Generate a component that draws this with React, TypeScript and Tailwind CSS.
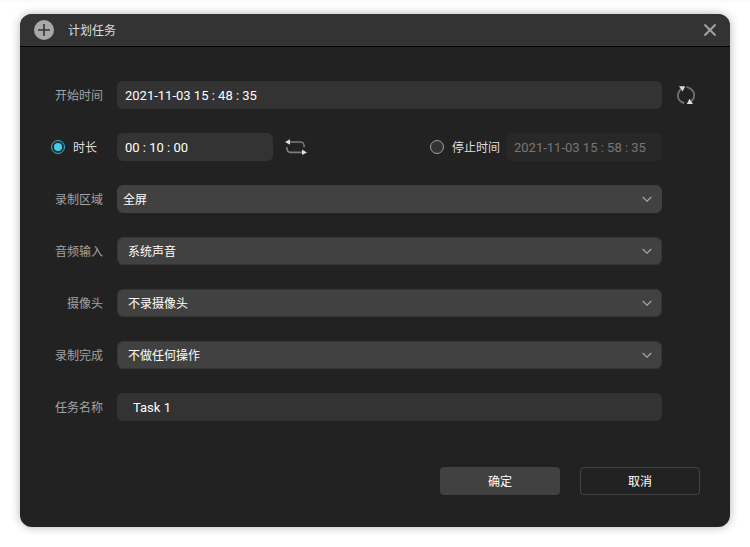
import { useState, type ReactNode } from 'react';
import clsx from 'clsx';

interface RowProps {
  id: string;
  label: string;
  children: ReactNode;
  extra?: ReactNode;
}

function Row({ id, label, children, extra }: RowProps) {
  return (
    <div className="flex h-7 items-center">
      <label htmlFor={id} className="w-[97px] shrink-0 pr-3.5 text-right text-[#a3a3a3]">
        {label}
      </label>
      <div className="min-w-0 flex-1">{children}</div>
      <div className="flex w-[68px] shrink-0 pl-3.5">{extra}</div>
    </div>
  );
}

interface SelectProps {
  id: string;
  options: string[];
  outlined?: boolean;
}

function Select({ id, options, outlined }: SelectProps) {
  return (
    <div className="relative">
      <select
        id={id}
        className={clsx(
          'block h-7 w-full appearance-none rounded-md border bg-[#414141] pr-8 text-[12px] leading-4 text-white outline-none',
          outlined ? 'border-[#363636] pl-2.5' : 'border-[#414141] pl-[5px]',
        )}
      >
        {options.map((option) => (
          <option key={option}>{option}</option>
        ))}
      </select>
      <svg
        className="pointer-events-none absolute top-2.5 right-2.5 h-2 w-2.5"
        viewBox="0 0 10 8"
        fill="none"
        stroke="#a8a8a8"
        strokeWidth="1.2"
      >
        <path d="M0.7 2 5 6.2 9.3 2" />
      </svg>
    </div>
  );
}

const inputClass =
  "block h-7 rounded-md bg-[#333] px-2 font-[Roboto,'Noto_Sans_CJK_SC',sans-serif] text-[13px] text-white outline-none disabled:bg-[#282828] disabled:text-[#777]";

const radioClass =
  "grid h-3.5 w-3.5 shrink-0 appearance-none place-items-center rounded-full border border-[#a0a0a0] bg-[#333] before:h-2 before:w-2 before:rounded-full before:content-[''] checked:border-[#35b3cd] checked:bg-[#1d3035] checked:before:bg-[#45cdea]";

function RefreshIcon() {
  return (
    <svg className="h-5 w-5" viewBox="0 0 20 20" fill="none">
      <path d="M4.8 4.2C1 7.4 1 12.6 3.8 15.6 5 16.9 6.4 17.6 8.2 18" stroke="#737373" strokeWidth="1.8" />
      <path d="M10.4 2.2C15 2.6 18.2 6 18.2 10.2 18.2 12.6 17.4 14.4 15.4 16.2" stroke="#737373" strokeWidth="1.8" />
      <path d="M3 1.2H9.2L6.6 6.4Z" fill="#dedede" />
      <path d="M17 19H10.8L13.6 13.8Z" fill="#dedede" />
    </svg>
  );
}

function RepeatIcon() {
  return (
    <svg className="h-4 w-[23px]" viewBox="0 0 23 16" fill="none">
      <path d="M4 3H15.5C18.6 3 19.2 4.6 19.2 8.2" stroke="#7c7c7c" strokeWidth="1.6" />
      <path d="M1.8 8C1.8 12 2.8 13.4 5.4 13.4H18" stroke="#7c7c7c" strokeWidth="1.6" />
      <path d="M0 3 5 0.2V5.8Z" fill="#dedede" />
      <path d="M22 13.4 17 10.6V16Z" fill="#dedede" />
    </svg>
  );
}

export default function App() {
  const [mode, setMode] = useState('duration');

  return (
    <main className="min-h-screen border-t-2 border-[#fafafa] bg-white px-5 pt-3 pb-5 font-['Noto_Sans_CJK_SC',sans-serif] text-[12px] leading-4">
      <section className="overflow-hidden rounded-xl bg-[#222] shadow-[0_0_10px_rgba(0,0,0,0.3)]">
        <header className="flex h-[33px] items-center border-b border-black bg-[#333] px-3.5">
          <svg className="h-5 w-5" viewBox="0 0 20 20">
            <circle cx="10" cy="10" r="10" fill="#a8a8a8" />
            <path d="M10 4V16M4 10H16" stroke="#333" strokeWidth="1.6" />
          </svg>
          <h1 className="ml-3.5 flex-1 text-[#dedede]">计划任务</h1>
          <button type="button" aria-label="关闭">
            <svg className="h-3 w-3" viewBox="0 0 12 12" fill="none" stroke="#a3a3a3" strokeWidth="2">
              <path d="M0.5 0.5 11.5 11.5M11.5 0.5 0.5 11.5" />
            </svg>
          </button>
        </header>

        <form className="pt-[34px] pb-8" onSubmit={(e) => e.preventDefault()}>
          <div className="flex flex-col gap-6">
            <Row
              id="start"
              label="开始时间"
              extra={
                <button type="button" aria-label="刷新">
                  <RefreshIcon />
                </button>
              }
            >
              <input id="start" type="text" className={clsx(inputClass, 'w-full')} defaultValue="2021-11-03 15 : 48 : 35" />
            </Row>

            <div className="flex h-7 items-center pr-[68px] text-[#dedede]">
              <label className="flex w-[97px] shrink-0 items-center gap-2 pl-[31px]">
                <input
                  type="radio"
                  name="mode"
                  className={radioClass}
                  checked={mode === 'duration'}
                  onChange={() => setMode('duration')}
                />
                时长
              </label>
              <input
                type="text"
                aria-label="时长"
                className={clsx(inputClass, 'w-[156px]')}
                defaultValue="00 : 10 : 00"
                disabled={mode !== 'duration'}
              />
              <button type="button" aria-label="切换" className="ml-3">
                <RepeatIcon />
              </button>
              <label className="mr-1.5 ml-auto flex shrink-0 items-center gap-2">
                <input
                  type="radio"
                  name="mode"
                  className={radioClass}
                  checked={mode === 'stop'}
                  onChange={() => setMode('stop')}
                />
                停止时间
              </label>
              <input
                type="text"
                aria-label="停止时间"
                className={clsx(inputClass, 'w-[156px]')}
                defaultValue="2021-11-03 15 : 58 : 35"
                disabled={mode !== 'stop'}
              />
            </div>

            <Row id="area" label="录制区域">
              <Select id="area" options={['全屏']} />
            </Row>
            <Row id="audio" label="音频输入">
              <Select id="audio" options={['系统声音']} outlined />
            </Row>
            <Row id="camera" label="摄像头">
              <Select id="camera" options={['不录摄像头']} outlined />
            </Row>
            <Row id="finish" label="录制完成">
              <Select id="finish" options={['不做任何操作']} outlined />
            </Row>
            <Row id="name" label="任务名称">
              <input id="name" type="text" className={clsx(inputClass, 'w-full pl-4')} defaultValue="Task 1" />
            </Row>
          </div>

          <div className="mt-[46px] flex justify-end gap-5 pr-[30px] text-white">
            <button type="submit" className="h-7 w-[120px] rounded bg-[#414141]">
              确定
            </button>
            <button type="button" className="h-7 w-[120px] rounded border border-[#444]">
              取消
            </button>
          </div>
        </form>
      </section>
    </main>
  );
}
